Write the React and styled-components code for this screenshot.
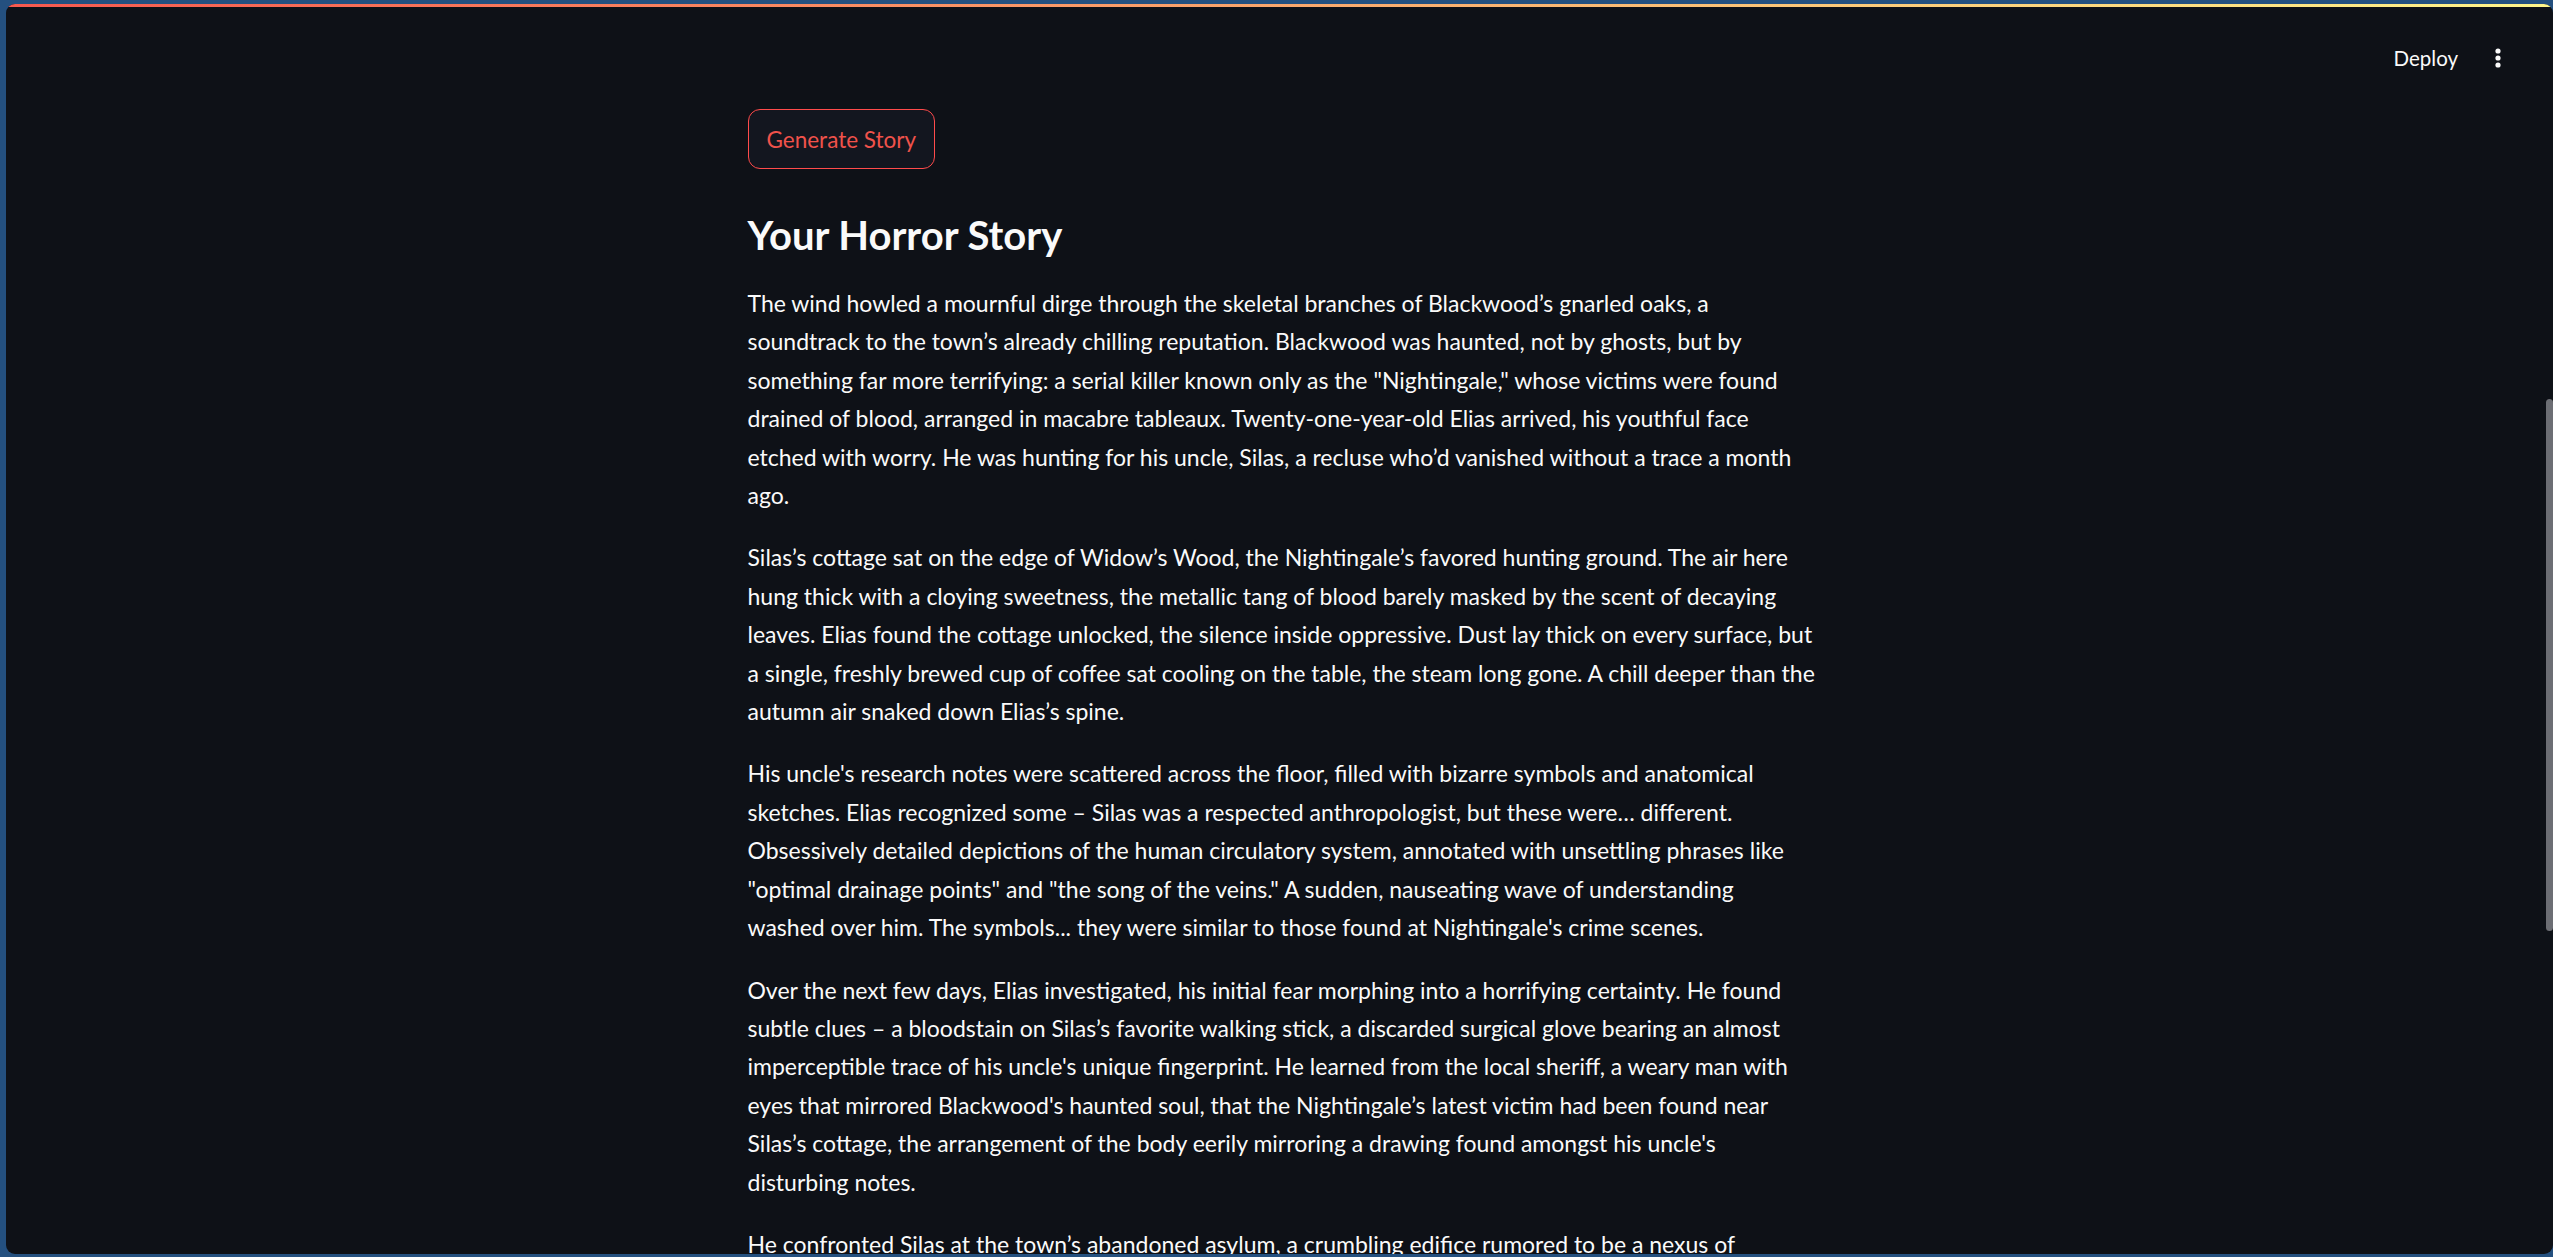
import React from "react";
import styled, { createGlobalStyle } from "styled-components";

const GlobalStyle = createGlobalStyle`
  html, body {
    margin: 0;
    padding: 0;
    height: 100%;
    overflow: hidden;
    background: #24507f;
  }
  #root { height: 100%; }
  *, *::before, *::after { box-sizing: border-box; }
`;

const Frame = styled.div`
  height: 100vh;
  padding: 4px 0 3px 6px;
  display: flex;
`;

const AppWindow = styled.div`
  position: relative;
  flex: 1;
  min-width: 0;
  background: #0e1117;
  border-radius: 9px;
  overflow: hidden;
  display: flex;
  flex-direction: column;
  font-family: Lato, "Noto Sans", sans-serif;
  color: #fafafa;
`;

const Decoration = styled.div`
  height: 3px;
  flex-shrink: 0;
  background: linear-gradient(90deg, #f7594f, #fef58a);
`;

const Header = styled.header`
  height: 102px;
  flex-shrink: 0;
  display: flex;
  align-items: center;
  justify-content: flex-end;
  gap: 28px;
  padding-right: 43px;
`;

const DeployButton = styled.button`
  background: transparent;
  border: none;
  padding: 0;
  color: #fafafa;
  font-family: Lato, "Noto Sans", sans-serif;
  font-size: 20.5px;
  font-weight: 400;
  cursor: pointer;
`;

const MenuButton = styled.button`
  background: transparent;
  border: none;
  padding: 0;
  width: 24px;
  height: 24px;
  display: flex;
  align-items: center;
  justify-content: center;
  color: #fafafa;
`;

const Main = styled.main`
  flex: 1;
  min-height: 0;
  display: flex;
  align-items: flex-start;
  justify-content: center;
  padding-right: 8px;
`;

const Column = styled.div`
  width: 1056px;
  flex-shrink: 0;
  display: flex;
  flex-direction: column;
  align-items: flex-start;
`;

const StoryButton = styled.button`
  flex-shrink: 0;
  height: 60px;
  padding: 0 18px;
  border: 1.5px solid #ff4b4b;
  border-radius: 12px;
  background: #13161f;
  color: #f0524b;
  font-family: Lato, "Noto Sans", sans-serif;
  font-size: 22.5px;
  font-weight: 400;
  cursor: pointer;
`;

const Title = styled.h3`
  flex-shrink: 0;
  margin: 42px 0 25px;
  font-size: 40px;
  font-weight: 700;
  line-height: 1.2;
  color: #fafafa;
`;

const Paragraph = styled.p`
  flex-shrink: 0;
  margin: 0 0 24px;
  font-size: 23px;
  line-height: 38.4px;
`;

const Line = styled.span`
  display: block;
  white-space: nowrap;
`;

const ScrollThumb = styled.div`
  position: absolute;
  right: 0;
  top: 395px;
  width: 7px;
  height: 532px;
  border-radius: 4px;
  background: #6c6e74;
`;

const story = [
  [
    "The wind howled a mournful dirge through the skeletal branches of Blackwood’s gnarled oaks, a",
    "soundtrack to the town’s already chilling reputation. Blackwood was haunted, not by ghosts, but by",
    "something far more terrifying: a serial killer known only as the \"Nightingale,\" whose victims were found",
    "drained of blood, arranged in macabre tableaux. Twenty-one-year-old Elias arrived, his youthful face",
    "etched with worry. He was hunting for his uncle, Silas, a recluse who’d vanished without a trace a month",
    "ago.",
  ],
  [
    "Silas’s cottage sat on the edge of Widow’s Wood, the Nightingale’s favored hunting ground. The air here",
    "hung thick with a cloying sweetness, the metallic tang of blood barely masked by the scent of decaying",
    "leaves. Elias found the cottage unlocked, the silence inside oppressive. Dust lay thick on every surface, but",
    "a single, freshly brewed cup of coffee sat cooling on the table, the steam long gone. A chill deeper than the",
    "autumn air snaked down Elias’s spine.",
  ],
  [
    "His uncle's research notes were scattered across the floor, filled with bizarre symbols and anatomical",
    "sketches. Elias recognized some – Silas was a respected anthropologist, but these were… different.",
    "Obsessively detailed depictions of the human circulatory system, annotated with unsettling phrases like",
    "\"optimal drainage points\" and \"the song of the veins.\" A sudden, nauseating wave of understanding",
    "washed over him. The symbols... they were similar to those found at Nightingale's crime scenes.",
  ],
  [
    "Over the next few days, Elias investigated, his initial fear morphing into a horrifying certainty. He found",
    "subtle clues – a bloodstain on Silas’s favorite walking stick, a discarded surgical glove bearing an almost",
    "imperceptible trace of his uncle's unique fingerprint. He learned from the local sheriff, a weary man with",
    "eyes that mirrored Blackwood's haunted soul, that the Nightingale’s latest victim had been found near",
    "Silas’s cottage, the arrangement of the body eerily mirroring a drawing found amongst his uncle's",
    "disturbing notes.",
  ],
  [
    "He confronted Silas at the town’s abandoned asylum, a crumbling edifice rumored to be a nexus of",
  ],
];

function DotsIcon() {
  return (
    <svg width="24" height="24" viewBox="0 0 24 24" fill="currentColor">
      <circle cx="12" cy="5" r="2.6" />
      <circle cx="12" cy="12" r="2.6" />
      <circle cx="12" cy="19" r="2.6" />
    </svg>
  );
}

export default function App() {
  return (
    <>
      <GlobalStyle />
      <Frame>
        <AppWindow>
          <Decoration />
          <Header>
            <DeployButton>Deploy</DeployButton>
            <MenuButton aria-label="Main menu">
              <DotsIcon />
            </MenuButton>
          </Header>
          <Main>
            <Column>
              <StoryButton>Generate Story</StoryButton>
              <Title>Your Horror Story</Title>
              {story.map((lines, i) => (
                <Paragraph key={i}>
                  {lines.map((l, j) => (
                    <Line key={j}>{l}</Line>
                  ))}
                </Paragraph>
              ))}
            </Column>
          </Main>
          <ScrollThumb />
        </AppWindow>
      </Frame>
    </>
  );
}
